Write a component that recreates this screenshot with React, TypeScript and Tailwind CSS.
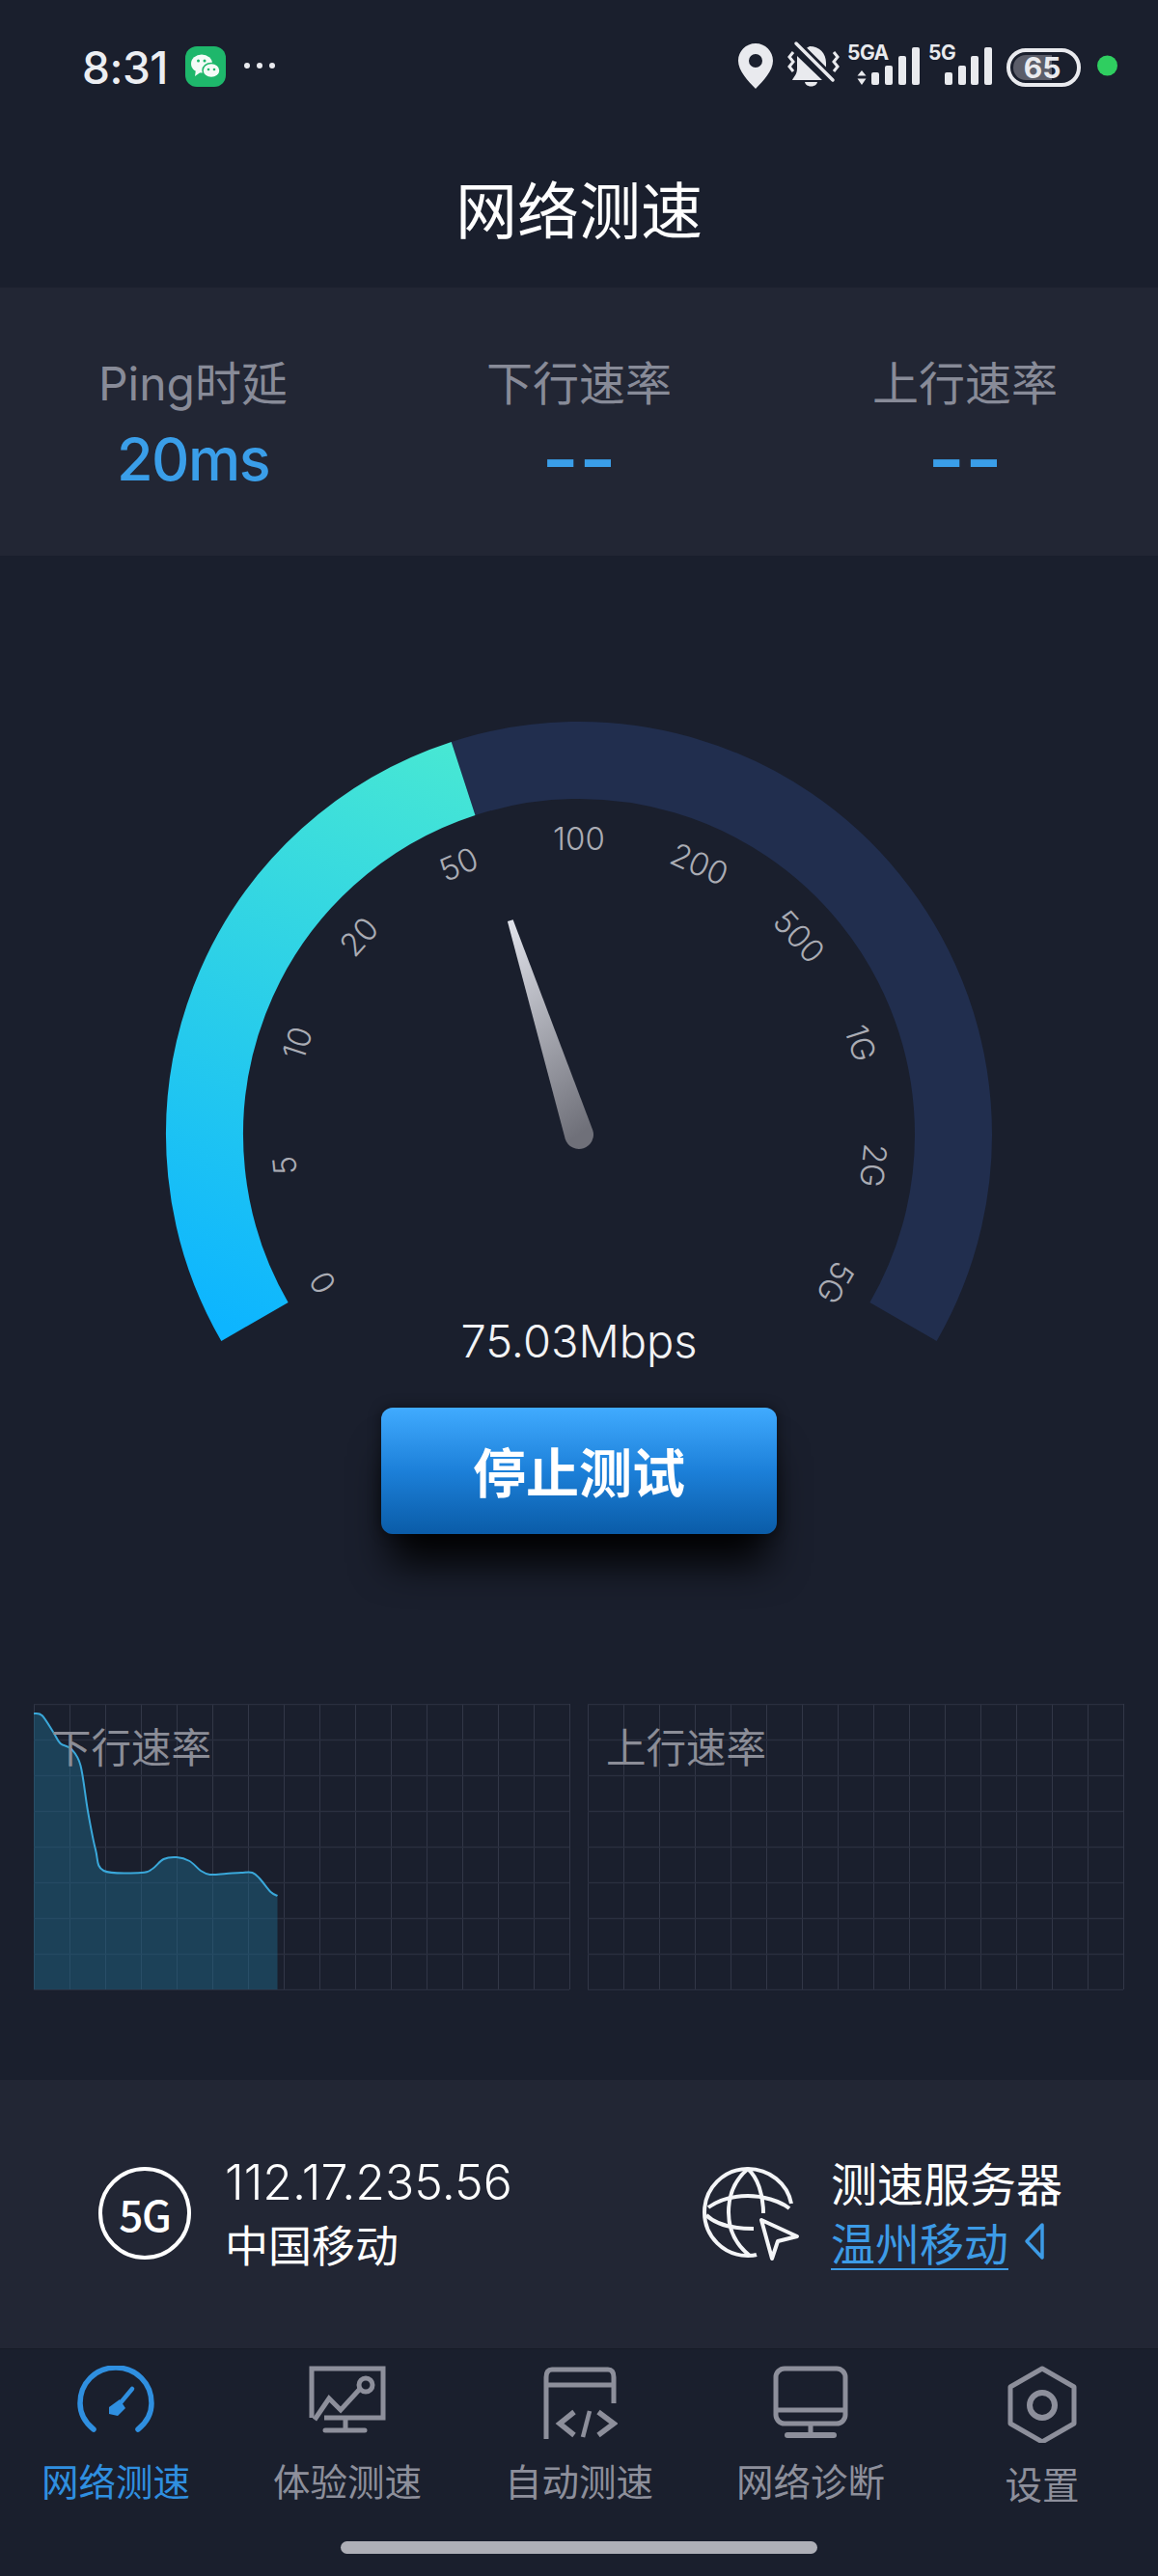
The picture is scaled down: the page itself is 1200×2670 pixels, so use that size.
import React from "react";

const LATIN = "font-['Inter','Noto_Sans_CJK_SC',sans-serif]";

const LABELS = ["0", "5", "10", "20", "50", "100", "200", "500", "1G", "2G", "5G"];

function polar(r: number, deg: number) {
  const a = (deg * Math.PI) / 180;
  return [600 + r * Math.sin(a) - 172, 1176 - r * Math.cos(a) - 748];
}
function arc(r: number, a0: number, a1: number) {
  const [x0, y0] = polar(r, a0);
  const [x1, y1] = polar(r, a1);
  const large = a1 - a0 > 180 ? 1 : 0;
  return `M${x0} ${y0}A${r} ${r} 0 ${large} 1 ${x1} ${y1}`;
}

function Gauge() {
  const cx = 428;
  const cy = 428;
  return (
    <svg width="856" height="612" viewBox="0 0 856 612" className="block overflow-visible">
      <defs>
        <linearGradient id="g1" gradientUnits="userSpaceOnUse" x1="100" y1="640" x2="330" y2="30">
          <stop offset="0" stopColor="#0db5ff" />
          <stop offset="1" stopColor="#48e8d3" />
        </linearGradient>
        <linearGradient id="n1" gradientUnits="userSpaceOnUse" x1="357" y1="206" x2="428" y2="428">
          <stop offset="0" stopColor="#e6e8f0" />
          <stop offset="1" stopColor="#6f7079" />
        </linearGradient>
      </defs>
      <path d={arc(388, -18, 120)} fill="none" stroke="#212e4e" strokeWidth="80" />
      <path d={arc(388, -120, -18)} fill="none" stroke="url(#g1)" strokeWidth="80" />
      {LABELS.map((t, i) => {
        const deg = -120 + i * 24;
        const [x, y] = polar(307, deg);
        return (
          <text
            key={t}
            x={x}
            y={y}
            textAnchor="middle"
            dominantBaseline="central"
            transform={`rotate(${deg} ${x} ${y})`}
            fill="#aaacb4"
            fontSize="33"
            fontWeight="300"
            fontFamily="Inter, sans-serif"
          >
            {t}
          </text>
        );
      })}
      <g transform={`rotate(-17.8 ${cx} ${cy})`}>
        <path d={`M${cx - 3} ${cy - 233}L${cx + 3} ${cy - 233}L${cx + 15} ${cy}A15 15 0 1 1 ${cx - 15} ${cy}Z`} fill="url(#n1)" />
      </g>
    </svg>
  );
}

const POINTS: [number, number][] = [
  [0, 10], [8.5, 12], [20, 29], [27.5, 41], [39, 47], [48.5, 64], [56, 111], [64, 151], [72.5, 173],
  [111.5, 175], [123, 171], [134.5, 161], [148, 159], [161.5, 163], [173, 173], [182.5, 177],
  [199.5, 176], [215, 175], [226.5, 175], [234, 181], [245.5, 195], [252.5, 199],
];

function smooth(pts: [number, number][]) {
  let d = `M${pts[0][0]} ${pts[0][1]}`;
  for (let i = 0; i < pts.length - 1; i++) {
    const p0 = pts[Math.max(i - 1, 0)];
    const p1 = pts[i];
    const p2 = pts[i + 1];
    const p3 = pts[Math.min(i + 2, pts.length - 1)];
    const c1x = p1[0] + (p2[0] - p0[0]) / 6;
    const c1y = p1[1] + (p2[1] - p0[1]) / 6;
    const c2x = p2[0] - (p3[0] - p1[0]) / 6;
    const c2y = p2[1] - (p3[1] - p1[1]) / 6;
    d += `C${c1x} ${c1y} ${c2x} ${c2y} ${p2[0]} ${p2[1]}`;
  }
  return d;
}
const CURVE = smooth(POINTS);

function ChartGrid() {
  return (
    <g stroke="#2a2f3f" strokeWidth="1">
      {Array.from({ length: 16 }, (_, i) => (
        <line key={`v${i}`} x1={0.5 + i * 37} y1="0" x2={0.5 + i * 37} y2="296" stroke="#323747" />
      ))}
      {Array.from({ length: 9 }, (_, i) => (
        <line key={`h${i}`} x1="0" y1={0.5 + i * 37} x2="555" y2={0.5 + i * 37} strokeWidth="1.5" />
      ))}
    </g>
  );
}

function Chart({ label, data, cls }: { label: string; data?: boolean; cls: string }) {
  return (
    <div className="relative w-[556px] h-[297px]">
      <svg width="556" height="297" viewBox="0 0 556 297" className="block">
        <ChartGrid />
        {data && <path d={`${CURVE}L252.5 296L0 296Z`} fill="#1f6b8f" fillOpacity="0.45" />}
        {data && <path d={CURVE} fill="none" stroke="#3aa8da" strokeWidth="2" />}
      </svg>
      <span className={`absolute top-[20px] text-[41.5px] leading-[46px] text-[#8b8d97] font-['Noto_Sans_CJK_SC',sans-serif] ${cls}`}>
        {label}
      </span>
    </div>
  );
}

function Stat({ label, value, dash }: { label: string; value: string; dash?: boolean }) {
  return (
    <div className="flex flex-col items-center">
      <div className={`text-[48px] leading-[64px] text-[#888b98] ${LATIN} font-normal`}>{label}</div>
      {dash ? (
        <div className="mt-[4px] h-[84px] text-[84px] leading-[84px] font-medium text-[#3a9ee9] font-['Inter',sans-serif]">{value}</div>
      ) : (
        <div className={`mt-[10px] h-[72px] text-[61px] leading-[72px] font-medium tracking-[-1.5px] text-[#3a9ee9] ${LATIN}`}>{value}</div>
      )}
    </div>
  );
}

function StatusIcons() {
  return (
    <svg width="400" height="60" viewBox="0 0 400 60" className="block" fill="#e9eaee">
      {/* pin */}
      <path fillRule="evenodd" d="M23 5C13 5 5 13 5 23C5 33 15 44 23 52C31 44 41 33 41 23C41 13 33 5 23 5ZM23 16A7 7 0 1 1 23 30A7 7 0 0 1 23 16Z" />
      {/* bell */}
      <path d="M79 8C89 8 96 15 96 25L96 37L72 12ZM66 18L92 43L61 43C63 39 66 37 66 31ZM74 45L87 45C86 51 75 51 74 45Z" />
      <path d="M65 5L103 43" stroke="#1a1f2d" strokeWidth="9" />
      <path d="M65 5L103 43" stroke="#e9eaee" strokeWidth="3.5" strokeLinecap="round" />
      <path d="M62 14L58 19L62 24L58 29L62 34M104 14L108 19L104 24L108 29L104 34" fill="none" stroke="#e9eaee" strokeWidth="3" />
      {/* 5GA */}
      <text x="118" y="22" fontSize="21" fontWeight="700" fontFamily="Inter, sans-serif" letterSpacing="-0.5">5GA</text>
      <path d="M133 33L137.5 38.5L128.5 38.5ZM133 48L137.5 41.5L128.5 41.5Z" />
      <rect x="143" y="35" width="8" height="13" rx="2" />
      <rect x="157" y="28" width="8" height="20" rx="2" />
      <rect x="171" y="18" width="8" height="30" rx="2" />
      <rect x="185" y="9" width="8" height="39" rx="2" />
      {/* 5G */}
      <text x="202" y="22" fontSize="21" fontWeight="700" fontFamily="Inter, sans-serif" letterSpacing="-0.5">5G</text>
      <rect x="219" y="35" width="8" height="13" rx="2" />
      <rect x="233" y="28" width="8" height="20" rx="2" />
      <rect x="246" y="18" width="8" height="30" rx="2" />
      <rect x="260" y="9" width="8" height="39" rx="2" />
      {/* battery */}
      <rect x="285" y="12" width="73" height="36" rx="18" fill="none" stroke="#e9eaee" strokeWidth="4" />
      <path d="M303 17L330 17L330 43L303 43A13 13 0 0 1 303 17Z" fill="#5b5d69" />
      <text x="320" y="41" textAnchor="middle" fontSize="30" fontWeight="700" fontFamily="Inter, sans-serif">65</text>
      <circle cx="387.5" cy="28" r="10.5" fill="#2fce60" />
    </svg>
  );
}

function StatusBar() {
  return (
    <div className="h-[140px] flex items-start pl-[85px] pr-[40px]">
      <span className={`w-[90px] mt-[42px] text-[46px] leading-[56px] text-[#eceef2] font-medium tracking-[-0.5px] ${LATIN}`}>8:31</span>
      <div className="mt-[48px] ml-[17px] w-[42px] h-[42px] rounded-[12px] bg-[#1eb76b] flex items-center justify-center">
        <svg width="34" height="30" viewBox="0 0 34 30" fill="#f4fbf7">
          <ellipse cx="13" cy="12" rx="11" ry="9.5" />
          <path d="M7 18L6 25L13 20Z" />
          <ellipse cx="23" cy="19" rx="9" ry="7.5" stroke="#1eb76b" strokeWidth="1.5" />
          <circle cx="9.5" cy="9" r="1.5" fill="#1eb76b" />
          <circle cx="16" cy="9" r="1.5" fill="#1eb76b" />
          <circle cx="20" cy="18" r="1.3" fill="#1eb76b" />
          <circle cx="26" cy="18" r="1.3" fill="#1eb76b" />
        </svg>
      </div>
      <div className="mt-[65px] ml-[19px] flex gap-[7px]">
        <div className="w-[6px] h-[6px] rounded-full bg-[#e9eaee]" />
        <div className="w-[6px] h-[6px] rounded-full bg-[#e9eaee]" />
        <div className="w-[6px] h-[6px] rounded-full bg-[#e9eaee]" />
      </div>
      <div className="ml-auto mt-[40px]">
        <StatusIcons />
      </div>
    </div>
  );
}

function Globe() {
  return (
    <svg width="104" height="104" viewBox="0 0 104 104" fill="none" stroke="#f4f5f7" strokeWidth="4">
      <path d="M95 42C91 21 72 6 50 6C25 6 5 26 5 51C5 76 25 96 50 96C53 96 56 96 59 95" />
      <path d="M50 6C37 17 30 33 30 51C30 69 38 85 52 96" />
      <path d="M50 6C60 15 66 32 66 52" />
      <path d="M9 46C20 38 35 34 50 34C65 34 83 39 93 47" />
      <path d="M7 54C17 64 35 68 56 68" />
      <path d="M64 59L101 76L81 81L75 99Z" strokeLinejoin="round" />
    </svg>
  );
}

function NavSpeed() {
  return (
    <svg width="80" height="80" viewBox="0 0 80 80" fill="none" stroke="#2f8fe0" strokeWidth="5.5" strokeLinecap="round">
      <path d="M17 66C7 58 3 49 3 39C3 18 19 2 40 2C61 2 77 18 77 39C77 49 73 58 63 66" />
      <path d="M57 24L42 42" strokeWidth="4.5" />
      <path d="M44 35L50 44L42 52L33 50L33 43Z" fill="#2f8fe0" stroke="none" />
    </svg>
  );
}

function NavExp() {
  return (
    <svg width="80" height="80" viewBox="0 0 80 80" fill="none" stroke="#8d8f9b" strokeWidth="5">
      <path d="M3 54L3 3L77 3L77 54L16 54" />
      <path d="M38 56L38 67M17 67L58 67" strokeLinecap="round" />
      <path d="M6 56L21 34L33 46L53 24" />
      <circle cx="59" cy="20" r="7" />
    </svg>
  );
}

function NavAuto() {
  return (
    <svg width="80" height="80" viewBox="0 0 80 80" fill="none" stroke="#8d8f9b" strokeWidth="5">
      <path d="M6 76L6 12C6 7 8 4 12 4L70 4C74 4 76 7 76 12L76 39" />
      <path d="M6 20L76 20" />
      <path d="M35 48L20 60L35 72M60 48L76 60L60 72" strokeWidth="5.5" />
      <path d="M51 47L44 74" strokeWidth="4.5" />
    </svg>
  );
}

function NavMon() {
  return (
    <svg width="80" height="80" viewBox="0 0 80 80" fill="none" stroke="#8d8f9b" strokeWidth="5">
      <rect x="4" y="3" width="72" height="57" rx="9" />
      <path d="M4 46L76 46M40 60L40 71" />
      <path d="M16 72L64 72" strokeWidth="6" strokeLinecap="round" />
    </svg>
  );
}

function NavHex() {
  return (
    <svg width="80" height="80" viewBox="0 0 80 80" fill="none" stroke="#8d8f9b" strokeWidth="5">
      <path d="M40 3L73 22L73 60L40 79L7 60L7 22Z" strokeLinejoin="round" />
      <circle cx="40" cy="41" r="13" strokeWidth="6" />
    </svg>
  );
}

const NAV = [
  { t: "网络测速", I: NavSpeed, cls: "mt-[13px] text-[#2f8fe0]" },
  { t: "体验测速", I: NavExp, cls: "mt-[13px] text-[#8d8f9b]" },
  { t: "自动测速", I: NavAuto, cls: "mt-[13px] text-[#8d8f9b]" },
  { t: "网络诊断", I: NavMon, cls: "mt-[13px] text-[#8d8f9b]" },
  { t: "设置", I: NavHex, cls: "mt-[16px] text-[#8d8f9b]" },
];

export default function App() {
  return (
    <div className="w-[1200px] h-[2670px] bg-[#1a1f2d] flex flex-col overflow-hidden font-['Noto_Sans_CJK_SC',sans-serif]">
      <StatusBar />
      <div className="h-[158px] flex items-center justify-center pb-[10px] text-[64px] leading-none text-white font-normal">
        网络测速
      </div>
      <div className="h-[278px] bg-[#222634] grid grid-cols-3 pt-[68px]">
        <Stat label="Ping时延" value="20ms" />
        <Stat label="下行速率" value="--" dash />
        <Stat label="上行速率" value="--" dash />
      </div>

      <div className="flex flex-col items-center pt-[172px]">
        <Gauge />
        <div className={`h-[60px] text-[47px] leading-[60px] text-[#f2f3f5] font-light ${LATIN}`}>75.03Mbps</div>
        <div className="mt-[39px] w-[410px] h-[131px] rounded-[12px] bg-gradient-to-b from-[#40abff] via-[#1c80d9] to-[#0a5ca8] flex items-center justify-center pb-[3px] text-[55px] font-bold text-white shadow-[0_40px_40px_-10px_rgba(0,0,0,0.95),0_0_14px_rgba(0,0,0,0.45)]">
          停止测试
        </div>
      </div>

      <div className="flex justify-between px-[35px] mt-[176px]">
        <Chart label="下行速率" data cls="left-[18px]" />
        <Chart label="上行速率" cls="left-[19px]" />
      </div>

      <div className="mt-[93px] h-[278px] bg-[#222634] flex items-center pl-[102px] pb-[2px] text-white">
        <div className="w-[96px] h-[96px] rounded-full border-[4px] border-white flex items-center justify-center text-[44px] font-medium leading-none tracking-tight">
          5G
        </div>
        <div className="ml-[35px] w-[297px] flex flex-col">
          <span className={`text-[50px] leading-[64px] whitespace-nowrap font-light ${LATIN}`}>112.17.235.56</span>
          <span className="text-[45px] leading-[64px]">中国移动</span>
        </div>
        <div className="ml-[195px]">
          <Globe />
        </div>
        <div className="ml-[32px] flex flex-col">
          <span className="text-[48px] leading-[64px] -mt-[6px]">测速服务器</span>
          <div className="flex items-center">
            <span className="text-[46px] leading-[56px] text-[#3d9be6] border-b-[2px] border-[#3d9be6] mt-[2px]">温州移动</span>
            <svg width="22" height="40" viewBox="0 0 22 40" fill="none" stroke="#3d9be6" strokeWidth="3.5" className="ml-[16px]">
              <path d="M19 3L3 20L19 37Z" strokeLinejoin="round" />
            </svg>
          </div>
        </div>
      </div>

      <div className="relative flex-1 grid grid-cols-5 border-t border-[#161a26]">
        {NAV.map(({ t, I, cls }) => (
          <div key={t} className="flex flex-col items-center pt-[17px]">
            <I />
            <span className={`text-[38.5px] leading-[50px] ${cls}`}>{t}</span>
          </div>
        ))}
        <div className="absolute left-[353px] bottom-[23px] w-[494px] h-[13px] rounded-full bg-[#aeafb7]" />
      </div>
    </div>
  );
}
